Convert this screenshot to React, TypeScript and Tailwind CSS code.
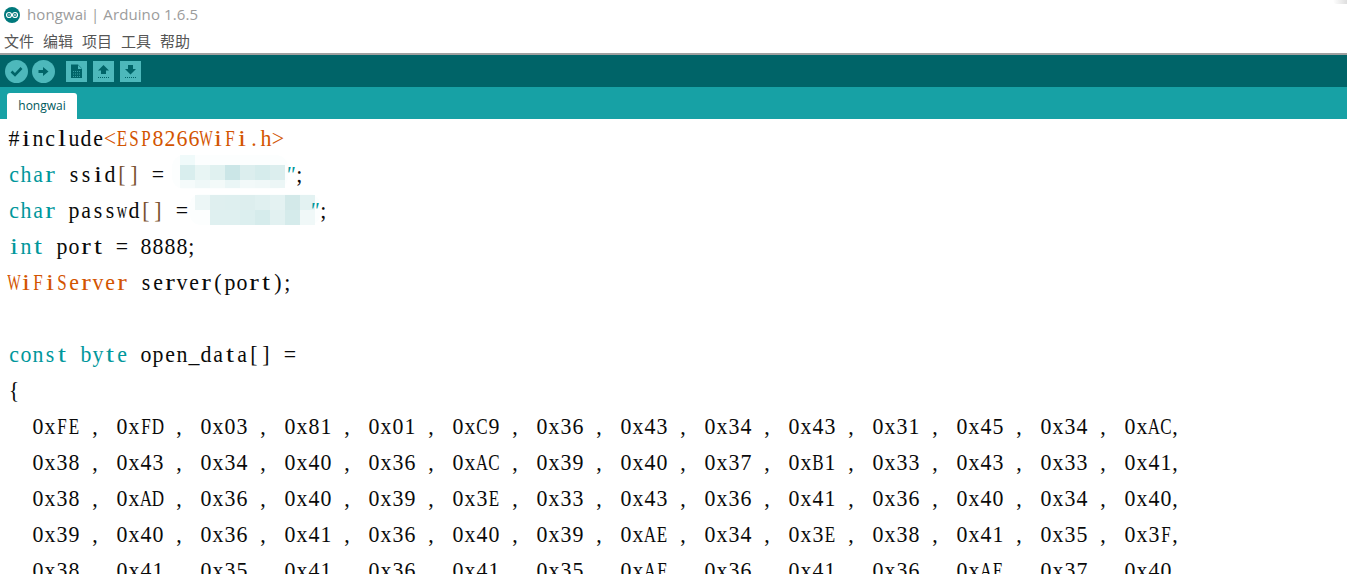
import { FC } from "react";

const rows = [
  ["0xFE", "0xFD", "0x03", "0x81", "0x01", "0xC9", "0x36", "0x43", "0x34", "0x43", "0x31", "0x45", "0x34", "0xAC"],
  ["0x38", "0x43", "0x34", "0x40", "0x36", "0xAC", "0x39", "0x40", "0x37", "0xB1", "0x33", "0x43", "0x33", "0x41"],
  ["0x38", "0xAD", "0x36", "0x40", "0x39", "0x3E", "0x33", "0x43", "0x36", "0x41", "0x36", "0x40", "0x34", "0x40"],
  ["0x39", "0x40", "0x36", "0x41", "0x36", "0x40", "0x39", "0xAE", "0x34", "0x3E", "0x38", "0x41", "0x35", "0x3F"],
  ["0x38", "0x41", "0x35", "0x41", "0x36", "0x41", "0x35", "0xAF", "0x36", "0x41", "0x36", "0xAE", "0x37", "0x40"],
];

const teal = "text-[#00979c]";
const orange = "text-[#d35400]";
const brown = "text-[#7a5230]";

const Code: FC<{ text: string; className?: string }> = ({ text, className }) => (
  <span className={className}>
    {text.split("").map((c, i) => {
      let fit = "scale-x-[.95]";
      if (/[mwW]/.test(c)) fit = "scale-x-[.62]";
      else if (/[A-Z]/.test(c)) fit = "scale-x-[.74]";
      else if (/[iljtfr]/.test(c)) fit = "scale-x-[1.25]";
      const align = /[,;]/.test(c) ? "justify-start" : "justify-center";
      return (
        <span key={i} className={`inline-flex w-[12px] whitespace-pre ${align} ${fit}`}>
          {c}
        </span>
      );
    })}
  </span>
);

const Line: FC<{ children?: React.ReactNode }> = ({ children }) => (
  <div className="relative h-[36px] whitespace-nowrap">{children}</div>
);

const Cells: FC<{ x: number; y: number; h: number; colors: string[] }> = ({ x, y, h, colors }) => (
  <>
    {colors.map((c, i) => (
      <rect key={i} x={x + i * 15} y={y} width="15" height={h} fill={c} />
    ))}
  </>
);

const App: FC = () => {
  return (
    <div className="relative flex h-[574px] w-[1347px] flex-col overflow-hidden bg-white">
      <div className="flex h-[29px] shrink-0 items-center gap-[7px] pl-[4px] font-['Open_Sans','Noto_Sans',sans-serif] text-[15px] tracking-[.1px] text-[#9c9c9c]">
        <svg width="16" height="16" viewBox="0 0 16 16">
          <circle cx="8" cy="8" r="8" fill="#00797c" />
          <circle cx="5" cy="8" r="2.5" fill="none" stroke="#fff" strokeWidth="1.2" />
          <circle cx="11" cy="8" r="2.5" fill="none" stroke="#fff" strokeWidth="1.2" />
          <path d="M4 8 H6 M10 8 H12 M11 7 V9" stroke="#fff" strokeWidth="0.7" />
        </svg>
        <span>hongwai | Arduino 1.6.5</span>
      </div>
      <div className="flex h-[24px] shrink-0 items-center gap-[9px] pl-[4px] font-['Noto_Sans_CJK_SC',sans-serif] text-[15px] text-[#555]">
        <span>文件</span>
        <span>编辑</span>
        <span>项目</span>
        <span>工具</span>
        <span>帮助</span>
      </div>
      <div className="h-[2px] shrink-0 bg-[#a0a0a0]" />
      <div className="flex h-[32px] shrink-0 items-center bg-[#006468] pl-[5px]">
        <span className="flex h-[23px] w-[23px] items-center justify-center rounded-full bg-[#4db8bb]">
          <svg width="13" height="11" viewBox="0 0 13 11">
            <path d="M1.5 5.5 L5 9 L11.5 2" fill="none" stroke="#006468" strokeWidth="2.6" />
          </svg>
        </span>
        <span className="ml-[4px] flex h-[23px] w-[23px] items-center justify-center rounded-full bg-[#4db8bb]">
          <svg width="11" height="11" viewBox="0 0 11 11">
            <path d="M0.5 4 H5 V1 L10.5 5.5 L5 10 V7 H0.5 Z" fill="#006468" />
          </svg>
        </span>
        <span className="ml-[11px] flex h-[21px] w-[21px] items-center justify-center bg-[#4db8bb]">
          <svg width="13" height="15" viewBox="0 0 13 15">
            <path d="M1 0.5 H8 L12 4.5 V14 H1 Z" fill="#006468" />
            <path d="M8 1 V5 H12" fill="#4db8bb" />
            <path d="M3 7.5 H10 M3 10 H10 M3 12.5 H10" stroke="#4db8bb" strokeWidth="0.7" strokeDasharray="1 1" />
          </svg>
        </span>
        <span className="ml-[6px] flex h-[21px] w-[21px] items-center justify-center bg-[#4db8bb]">
          <svg width="13" height="15" viewBox="0 0 13 15">
            <path d="M6.5 1 L12 6.5 H9 V10 H4 V6.5 H1 Z" fill="#006468" />
            <path d="M1 13.5 H12" stroke="#006468" strokeWidth="1" strokeDasharray="1 1" />
          </svg>
        </span>
        <span className="ml-[6px] flex h-[21px] w-[21px] items-center justify-center bg-[#4db8bb]">
          <svg width="13" height="15" viewBox="0 0 13 15">
            <path d="M4 1 H9 V5 H12 L6.5 10.5 L1 5 H4 Z" fill="#006468" />
            <path d="M1 13.5 H12" stroke="#006468" strokeWidth="1" strokeDasharray="1 1" />
          </svg>
        </span>
      </div>
      <div className="flex h-[32px] shrink-0 items-end bg-[#17a1a5] pl-[7px]">
        <div className="flex h-[26px] w-[70px] items-center justify-center rounded-t-[3px] bg-white pb-[1px] font-['Open_Sans',sans-serif] text-[12px] text-[#00595c]">
          hongwai
        </div>
      </div>
      <div className="relative pl-[8px] pt-[2px] font-['Liberation_Serif',serif] text-[23px] leading-[36px] text-[#0a0a0a]">
        {/* pixelated patches over the wifi credentials */}
        <svg className="absolute left-[170px] top-[36px]" width="170" height="75" viewBox="170 155 170 75">
          <rect x="172" y="155" width="116" height="34" rx="12" fill="#fcfefe" />
          <rect x="190" y="194" width="130" height="31" rx="10" fill="#fcfefe" />
          <Cells x={180} y={155} h={10} colors={["#f0fafa"]} />
          <Cells x={180} y={165} h={15} colors={["#d9eeee", "#e8f5f4", "#e0f1f0", "#cbe6e7", "#dceeee", "#d6ecec", "#dceeee"]} />
          <Cells x={180} y={180} h={8} colors={["#f5fbfb", "#eff8f8", "#f3faf9", "#eaf6f6", "#f2f9f9", "#f0f8f8", "#ecf6f6"]} />
          <Cells x={195} y={195} h={15} colors={["#ecf6f6", "#dfefef", "#deefef", "#ddeeee", "#e0f0f0", "#e4f2f2", "#d3e9e9", "#e3f2f2"]} />
          <Cells x={210} y={210} h={15} colors={["#dff0f0", "#dff0f0", "#dcefef", "#d6ecec", "#e2f1f1", "#d5ebeb", "#f0f8f8"]} />
        </svg>
        <Line>
          <Code text="#include" />
          <Code text="<ESP8266WiFi.h>" className={orange} />
        </Line>
        <Line>
          <Code text="char" className={teal} />
          <Code text=" ssid" />
          <Code text="[]" className={brown} />
          <Code text=" =" />
          <Code text={"          "} />
          <Code text={'"'} className={`${teal} italic`} />
          <Code text=";" />
        </Line>
        <Line>
          <Code text="char" className={teal} />
          <Code text=" passwd" />
          <Code text="[]" className={brown} />
          <Code text=" =" />
          <Code text={"          "} />
          <Code text={'"'} className={`${teal} italic`} />
          <Code text=";" />
        </Line>
        <Line>
          <Code text="int" className={teal} />
          <Code text=" port = 8888;" />
        </Line>
        <Line>
          <Code text="WiFiServer" className={orange} />
          <Code text=" server(port);" />
        </Line>
        <Line />
        <Line>
          <Code text="const byte" className={teal} />
          <Code text=" open_data[] =" />
        </Line>
        <Line>
          <Code text="{" />
        </Line>
        {rows.map((row, i) => (
          <Line key={i}>
            <Code text={"  " + row.join(" , ") + ","} />
          </Line>
        ))}
      </div>
      <div className="absolute right-0 top-0 h-[4px] w-[14px] rounded-bl-[4px] bg-gradient-to-l from-[#dedede] to-white" />
    </div>
  );
};

export default App;
